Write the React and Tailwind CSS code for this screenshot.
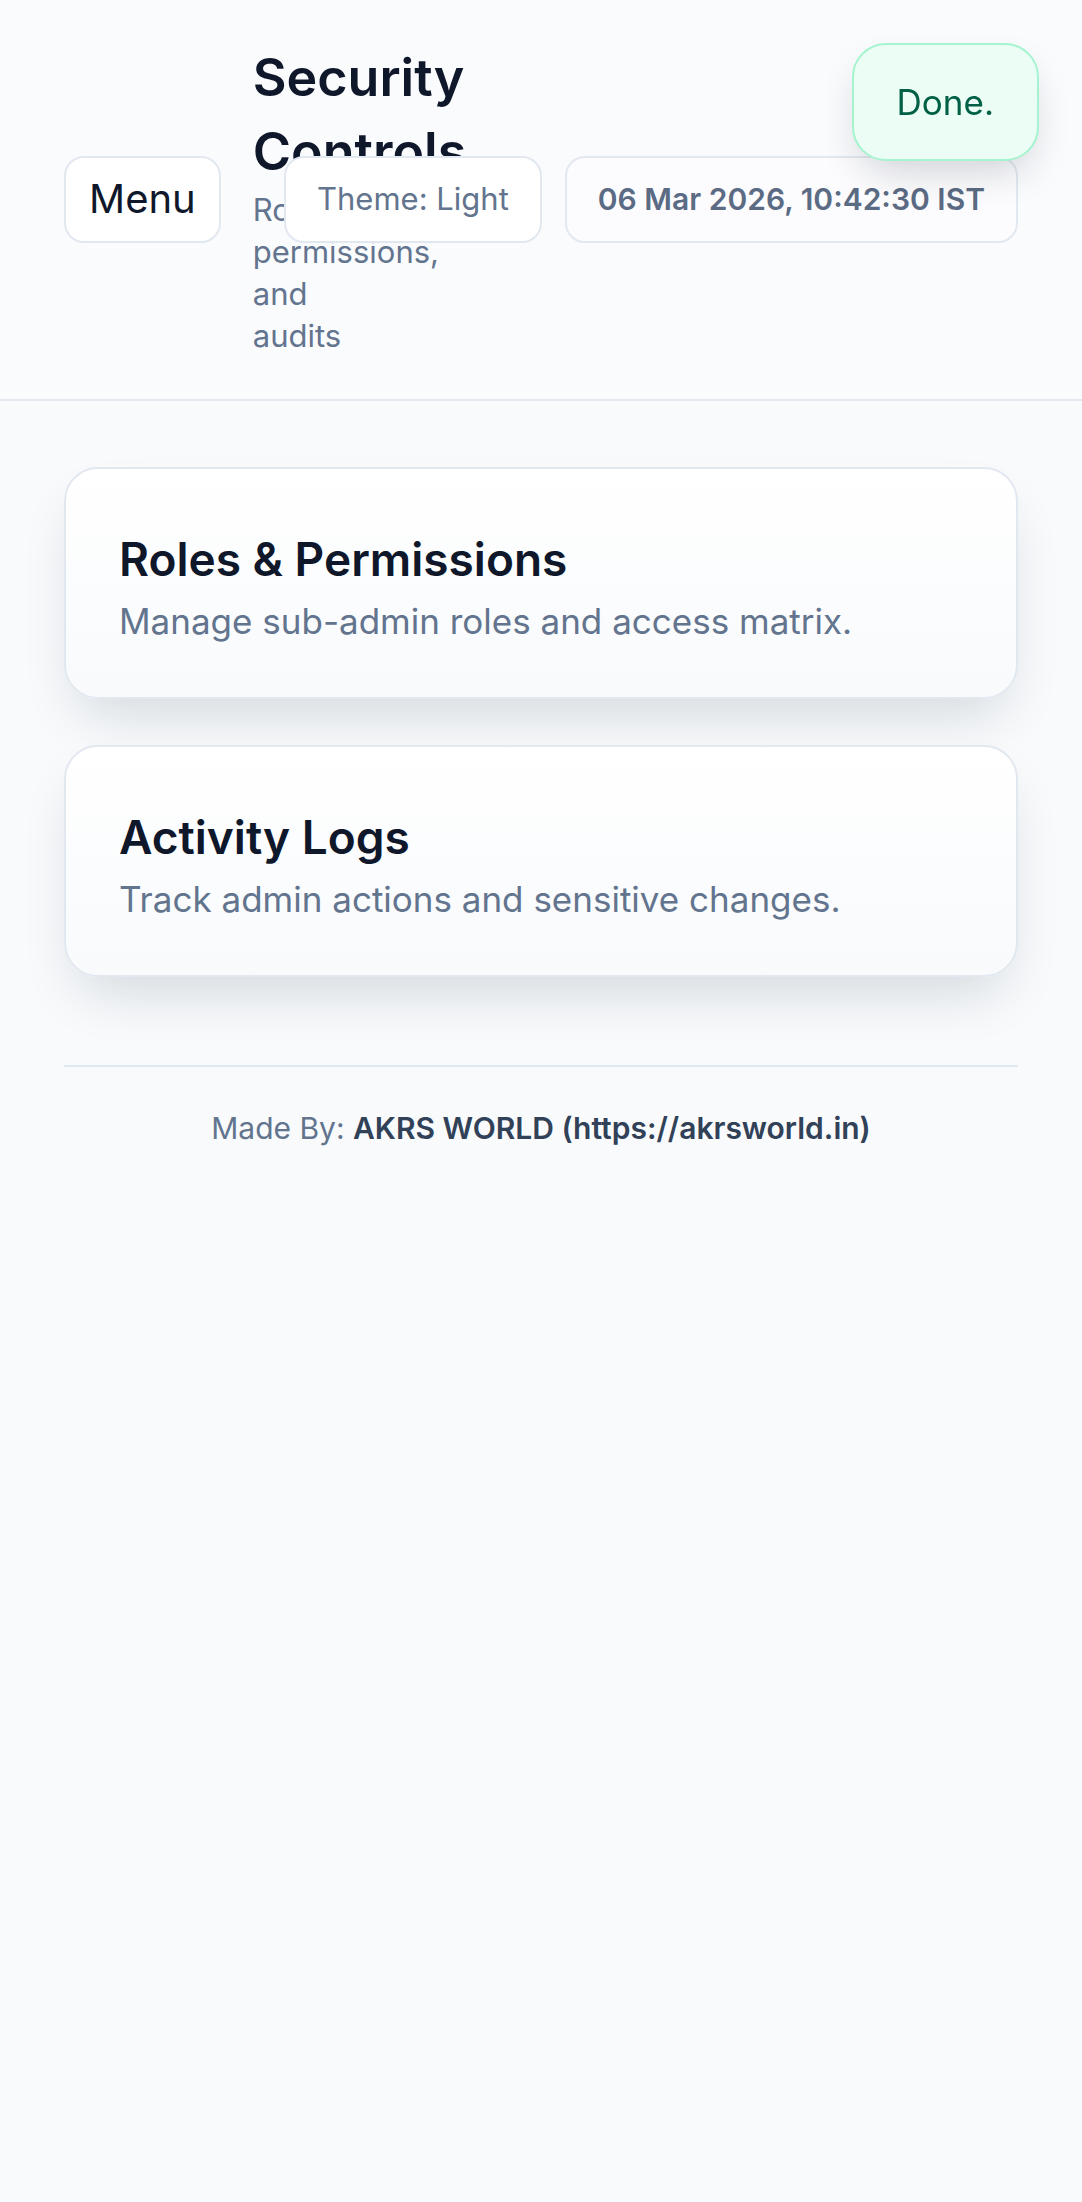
import React from "react";

const cards = [
  { title: "Roles & Permissions", text: "Manage sub-admin roles and access matrix." },
  { title: "Activity Logs", text: "Track admin actions and sensitive changes." },
];

export default function App() {
  return (
    <div className="min-h-screen bg-[#f8fafc] font-[Inter,sans-serif]">
      {/* header */}
      <header className="flex items-center border-b-2 border-slate-200 bg-white/30 px-[64px] pb-[42px] pt-[41px]">
        <div className="flex min-w-0 flex-1 items-center gap-[32px]">
          <button className="h-[87px] shrink-0 rounded-[20px] border-2 border-slate-200 bg-white px-[23px] text-[40px] leading-none text-slate-900">
            Menu
          </button>
          <div className="min-w-0 flex-1">
            <h1 className="text-[52px] font-semibold leading-[74px] text-slate-900">
              Security Controls
            </h1>
            <p className="text-[31px] leading-[42px] text-slate-500">
              Roles, permissions, and audits
            </p>
          </div>
        </div>
        <div className="flex shrink-0 items-center gap-[23px]">
          <button className="h-[87px] rounded-[20px] border-2 border-slate-200 bg-white px-[31px] text-[31px] text-slate-500">
            Theme: Light
          </button>
          <div className="flex h-[87px] items-center rounded-[20px] border-2 border-slate-200 bg-white/40 px-[31px] text-[30px] font-semibold text-[#5b6b84]">
            06 Mar 2026, 10:42:30 IST
          </div>
        </div>
      </header>

      {/* cards */}
      <main className="flex flex-col gap-[46px] px-[64px] pt-[66px]">
        {cards.map((c) => (
          <div
            key={c.title}
            className="rounded-[34px] border-2 border-slate-200 bg-gradient-to-b from-white to-[#f8fafc] px-[53px] pb-[52px] pt-[62px] shadow-[0_28px_56px_-16px_rgba(15,23,42,0.16)]"
          >
            <h2 className="text-[46px] font-semibold leading-[56px] text-slate-900">{c.title}</h2>
            <p className="mt-[10px] text-[35px] leading-[48px] text-slate-500">{c.text}</p>
          </div>
        ))}
      </main>

      {/* footer */}
      <footer className="mx-[64px] mt-[88px] border-t-2 border-slate-200 pt-[39px] text-center text-[30px] leading-[44px]">
        <span className="text-slate-500">Made By: </span>
        <span className="font-semibold text-slate-700">AKRS WORLD (https://akrsworld.in)</span>
      </footer>

      {/* toast */}
      <div className="fixed right-[43px] top-[43px] flex h-[118px] items-center rounded-[34px] border-2 border-emerald-200 bg-emerald-50 px-[43px] text-[35px] text-emerald-800 shadow-[0_18px_40px_-10px_rgba(15,23,42,0.2)]">
        Done.
      </div>
    </div>
  );
}
